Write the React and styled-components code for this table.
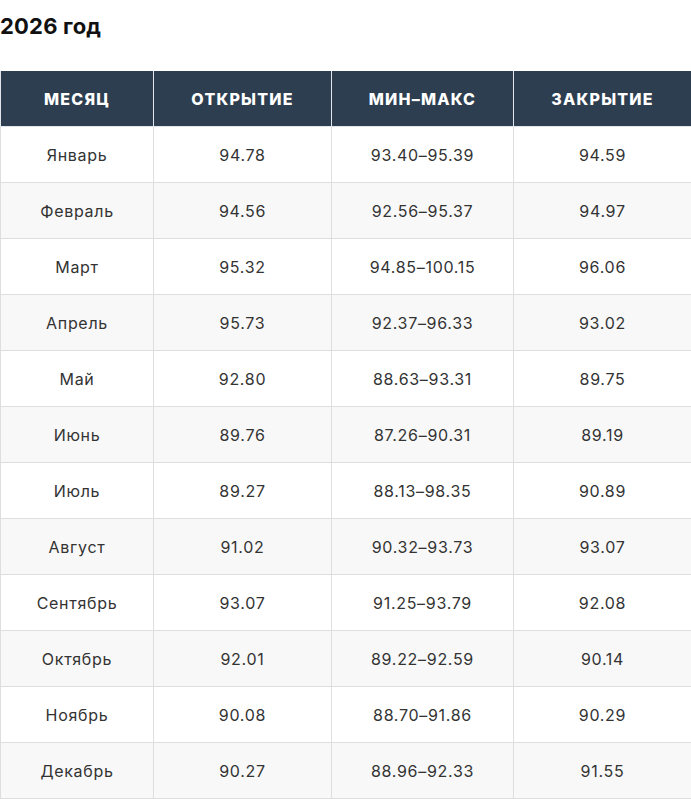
import React from "react";
import styled, { createGlobalStyle } from "styled-components";

const rows = [
  ["Январь", "94.78", "93.40–95.39", "94.59"],
  ["Февраль", "94.56", "92.56–95.37", "94.97"],
  ["Март", "95.32", "94.85–100.15", "96.06"],
  ["Апрель", "95.73", "92.37–96.33", "93.02"],
  ["Май", "92.80", "88.63–93.31", "89.75"],
  ["Июнь", "89.76", "87.26–90.31", "89.19"],
  ["Июль", "89.27", "88.13–98.35", "90.89"],
  ["Август", "91.02", "90.32–93.73", "93.07"],
  ["Сентябрь", "93.07", "91.25–93.79", "92.08"],
  ["Октябрь", "92.01", "89.22–92.59", "90.14"],
  ["Ноябрь", "90.08", "88.70–91.86", "90.29"],
  ["Декабрь", "90.27", "88.96–92.33", "91.55"],
];

const GlobalStyle = createGlobalStyle`
  body {
    margin: 0;
    background: #fff;
    font-family: Inter, "Noto Sans", "Liberation Sans", sans-serif;
    color: #333;
  }
`;

const Title = styled.h2`
  margin: 13px 0 32px;
  font-size: 22px;
  line-height: 26px;
  font-weight: 700;
  color: #111;
  letter-spacing: 0.2px;
`;

const Table = styled.table`
  width: 691px;
  border-collapse: collapse;
  table-layout: fixed;
`;

const Head = styled.th`
  height: 55px;
  padding: 0;
  background: #2c3e50;
  color: #fff;
  font-size: 16px;
  font-weight: 800;
  letter-spacing: 1.2px;
  text-transform: uppercase;
  text-align: center;
  border: 1px solid #e3e6ea;
  border-top: none;
`;

const Row = styled.tr`
  background: ${(p) => (p.$alt ? "#f8f8f8" : "#fff")};
`;

const Cell = styled.td`
  height: 55px;
  padding: 0;
  text-align: center;
  font-size: 16px;
  letter-spacing: 0.7px;
  color: #333;
  border: 1px solid #dedede;
  border-top: 1px solid #eee;
`;

export default function App() {
  return (
    <>
      <GlobalStyle />
      <Title>2026 год</Title>
      <Table>
        <colgroup>
          <col style={{ width: 153 }} />
          <col style={{ width: 178 }} />
          <col style={{ width: 182 }} />
          <col style={{ width: 178 }} />
        </colgroup>
        <thead>
          <tr>
            <Head>Месяц</Head>
            <Head>Открытие</Head>
            <Head>Мин–макс</Head>
            <Head>Закрытие</Head>
          </tr>
        </thead>
        <tbody>
          {rows.map((r, i) => (
            <Row key={r[0]} $alt={i % 2 === 1}>
              {r.map((v, j) => (
                <Cell key={j}>{v}</Cell>
              ))}
            </Row>
          ))}
        </tbody>
      </Table>
    </>
  );
}
